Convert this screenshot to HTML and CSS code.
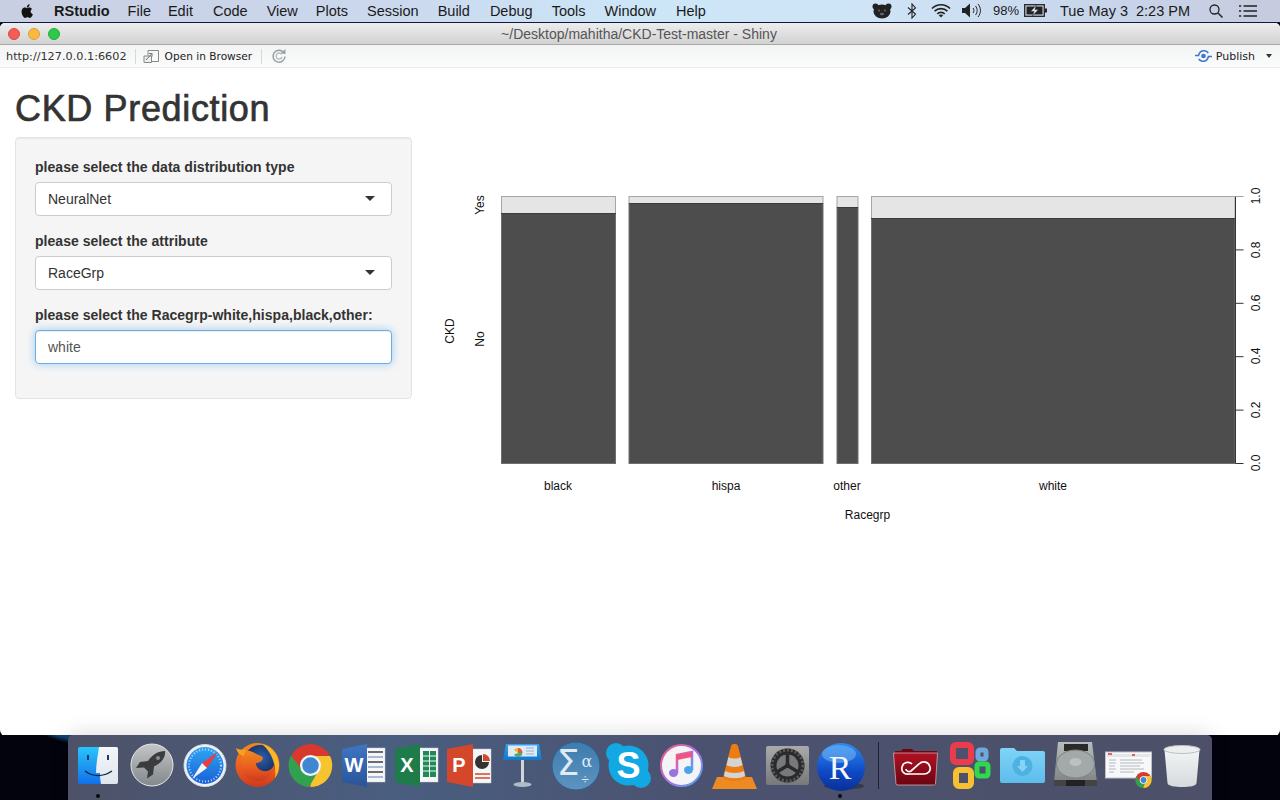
FILE: index.html
```html
<!DOCTYPE html>
<html lang="en">
<head>
<meta charset="utf-8">
<title>CKD Prediction</title>
<link rel="stylesheet" href="styles.css">
</head>
<body>
<svg class="defs" width="0" height="0" aria-hidden="true">
  <defs>
    <linearGradient id="gFinderL" x1="0" y1="0" x2="0" y2="1"><stop offset="0" stop-color="#29c5fb"/><stop offset="1" stop-color="#1270ea"/></linearGradient>
    <linearGradient id="gFinderR" x1="0" y1="0" x2="0" y2="1"><stop offset="0" stop-color="#f4f6f8"/><stop offset="1" stop-color="#dfe6ee"/></linearGradient>
    <linearGradient id="gGrey" x1="0" y1="0" x2="0" y2="1"><stop offset="0" stop-color="#c3c6c8"/><stop offset="1" stop-color="#82888b"/></linearGradient>
    <linearGradient id="gSafari" x1="0" y1="0" x2="0" y2="1"><stop offset="0" stop-color="#2fa6f2"/><stop offset="1" stop-color="#1a5fd6"/></linearGradient>
    <linearGradient id="gFox" x1="0" y1="0" x2="0" y2="1"><stop offset="0" stop-color="#f08a1e"/><stop offset=".6" stop-color="#e85a1f"/><stop offset="1" stop-color="#cf3a1c"/></linearGradient>
    <radialGradient id="gGlobe" cx=".55" cy=".4" r=".6"><stop offset="0" stop-color="#2a5fa8"/><stop offset="1" stop-color="#14265a"/></radialGradient>
    <linearGradient id="gMath" x1="0" y1="0" x2="0" y2="1"><stop offset="0" stop-color="#3d7cae"/><stop offset="1" stop-color="#5d93c0"/></linearGradient>
    <linearGradient id="gR" x1="0" y1="0" x2="0" y2="1"><stop offset="0" stop-color="#2e8bf0"/><stop offset=".6" stop-color="#0e49c4"/><stop offset="1" stop-color="#0a2f96"/></linearGradient>
    <linearGradient id="gTunes" x1="0" y1="0" x2="1" y2="1"><stop offset="0" stop-color="#f45a7e"/><stop offset=".5" stop-color="#b56ae0"/><stop offset="1" stop-color="#3fb0f2"/></linearGradient>
    <linearGradient id="gCC" x1="0" y1="0" x2="0" y2="1"><stop offset="0" stop-color="#b01224"/><stop offset="1" stop-color="#6b0410"/></linearGradient>
    <linearGradient id="gFolder" x1="0" y1="0" x2="0" y2="1"><stop offset="0" stop-color="#7fd4f8"/><stop offset="1" stop-color="#5cbdec"/></linearGradient>
    <linearGradient id="gHD" x1="0" y1="0" x2="0" y2="1"><stop offset="0" stop-color="#b7bcbc"/><stop offset="1" stop-color="#7f8585"/></linearGradient>
    <linearGradient id="gTrash" x1="0" y1="0" x2="0" y2="1"><stop offset="0" stop-color="#f2f4f5"/><stop offset="1" stop-color="#d6dadc"/></linearGradient>
    <linearGradient id="gCog" x1="0" y1="0" x2="0" y2="1"><stop offset="0" stop-color="#a8aaac"/><stop offset="1" stop-color="#77797b"/></linearGradient>
    <linearGradient id="gWord" x1="0" y1="0" x2="0" y2="1"><stop offset="0" stop-color="#3e76c4"/><stop offset="1" stop-color="#2a5499"/></linearGradient>
    <linearGradient id="gKey" x1="0" y1="0" x2="0" y2="1"><stop offset="0" stop-color="#2fa2ee"/><stop offset="1" stop-color="#1476cc"/></linearGradient>
  </defs>
</svg>

<header class="menubar">
  <nav class="menu-left">
    <svg class="apple" viewBox="0 0 14 16" width="14" height="16"><path d="M10.6 8.4c0-1.6 1.3-2.4 1.4-2.5-.8-1.100-2-1.300-2.400-1.300-1-.1-2 .6-2.500.6s-1.300-.6-2.200-.6c-1.100 0-2.200.7-2.800 1.700-1.200 2.100-.3 5.200.9 6.900.6.800 1.300 1.800 2.200 1.700.9 0 1.200-.6 2.300-.6s1.400.6 2.300.6c1 0 1.600-.9 2.100-1.700.7-1 1-1.900 1-2-.1 0-2.300-.9-2.300-2.800zM8.900 3.500c.5-.6.800-1.400.7-2.200-.7 0-1.500.5-2 1-.4.500-.8 1.300-.7 2.100.8.100 1.500-.4 2-.9z" fill="#111"/></svg>
    <span class="app-name">RStudio</span>
    <span class="m m-file">File</span>
    <span class="m m-edit">Edit</span>
    <span class="m m-code">Code</span>
    <span class="m m-view">View</span>
    <span class="m m-plots">Plots</span>
    <span class="m m-session">Session</span>
    <span class="m m-build">Build</span>
    <span class="m m-debug">Debug</span>
    <span class="m m-tools">Tools</span>
    <span class="m m-window">Window</span>
    <span class="m">Help</span>
  </nav>
  <div class="menu-right">
    <svg class="st st-bear" viewBox="0 0 20 16" width="20" height="16"><circle cx="3.500" cy="3.500" r="3" fill="#222"/><circle cx="16.500" cy="3.500" r="3" fill="#222"/><ellipse cx="10" cy="8.500" rx="8.500" ry="7" fill="#222"/><circle cx="7" cy="7.500" r="1" fill="#667"/><circle cx="13" cy="7.500" r="1" fill="#667"/><ellipse cx="10" cy="11" rx="2" ry="1.300" fill="#667"/></svg>
    <svg class="st st-bt" viewBox="0 0 10 16" width="10" height="16"><path d="M1 4.500 8.500 11 5 15V1l3.500 4L1 11.500" fill="none" stroke="#222" stroke-width="1.100"/></svg>
    <svg class="st st-wifi" viewBox="0 0 20 15" width="20" height="15"><path d="M1 5.500c5-5 13-5 18 0M3.600 8.200c3.600-3.500 9.200-3.500 12.800 0M6.300 10.800c2-2 5.400-2 7.400 0" fill="none" stroke="#222" stroke-width="1.700"/><path d="M10 14.500 7.800 12.300c1.200-1.100 3.200-1.100 4.400 0z" fill="#222"/></svg>
    <svg class="st st-vol" viewBox="0 0 20 15" width="20" height="15"><path d="M0 5h3l5-4.500v14L3 10H0z" fill="#222"/><path d="M11 5c1.200 1.500 1.200 3.500 0 5M13.500 3c2.200 2.700 2.200 6.300 0 9M16 1c3.300 4 3.300 9 0 13" fill="none" stroke="#222" stroke-width="1"/></svg>
    <span class="st-pct">98%</span>
    <svg class="st st-bat" viewBox="0 0 23 13" width="23" height="13"><rect x=".7" y=".7" width="19.600" height="11.600" fill="none" stroke="#222" stroke-width="1.300"/><rect x="2.500" y="2.500" width="16" height="8" fill="#222"/><rect x="21" y="4.500" width="2" height="4" fill="#222"/><path d="M12.500 1 6.500 7.500h3.500L8.500 12l6-6.500h-3.500z" fill="#d8e0ee" stroke="#222" stroke-width=".5"/></svg>
    <span class="st-date">Tue May 3</span>
    <span class="st-time">2:23 PM</span>
    <svg class="st st-search" viewBox="0 0 14 14" width="14" height="14"><circle cx="5.500" cy="5.500" r="4.500" fill="none" stroke="#222" stroke-width="1.300"/><path d="M9 9l4.500 4.500" stroke="#222" stroke-width="1.500"/></svg>
    <svg class="st st-list" viewBox="0 0 18 12" width="18" height="12"><path d="M4.500 1H18M4.500 6H18M4.500 11H18M0 1h2.200M0 6h2.200M0 11h2.200" stroke="#222" stroke-width="1.700"/></svg>
  </div>
</header>

<div class="window">
  <div class="titlebar">
    <div class="lights"><i class="light red"></i><i class="light amber"></i><i class="light green"></i></div>
    <div class="title">~/Desktop/mahitha/CKD-Test-master - Shiny</div>
  </div>
  <div class="toolbar">
    <span class="url">http://127.0.0.1:6602</span>
    <i class="tsep tsep-a"></i>
    <svg class="open-ico" viewBox="0 0 17 15" width="17" height="15"><path d="M5 1.500h10.500v11H9M5 1.500v5" fill="none" stroke="#888" stroke-width="1"/><path d="M1 7h7.500v6.500H1z" fill="#eee" stroke="#888" stroke-width="1"/><path d="M3 11 9 4.500M6 4.500h3v3" fill="none" stroke="#777" stroke-width="1"/></svg>
    <span class="open-text">Open in Browser</span>
    <i class="tsep tsep-b"></i>
    <svg class="reload" viewBox="0 0 16 16" width="16" height="16"><path d="M12.500 4.200A6 6 0 1 0 14 8.500" fill="none" stroke="#98a0a6" stroke-width="1.500"/><path d="M10.500 6.200A3 3 0 1 0 11 9" fill="none" stroke="#b8bec2" stroke-width="1.500"/><path d="M9.500 5.500 14.500 1v5z" fill="#98a0a6"/></svg>
    <div class="publish">
      <svg class="pub-ico" viewBox="0 0 17 14" width="17" height="14"><circle cx="8.500" cy="7" r="2.300" fill="#3a78c9"/><path d="M0 6.500h3.500C4.500 3 7 1.500 9.500 1.800c1.800.2 3 1.100 3.700 2.200M17 7.500h-3.500c-1 3.500-3.500 5-6 4.700-1.800-.2-3-1.100-3.700-2.200" fill="none" stroke="#3a78c9" stroke-width="1.600"/></svg>
      <span class="pub-text">Publish</span>
      <i class="caret-small"></i>
    </div>
  </div>
  <main class="shiny">
    <h2 class="app-title">CKD Prediction</h2>
    <div class="row">
      <form class="well">
        <div class="group">
          <label class="lab">please select the data distribution type</label>
          <div class="control select">NeuralNet<i class="caret"></i></div>
        </div>
        <div class="group">
          <label class="lab">please select the attribute</label>
          <div class="control select">RaceGrp<i class="caret"></i></div>
        </div>
        <div class="group">
          <label class="lab">please select the Racegrp-white,hispa,black,other:</label>
          <div class="control input">white</div>
        </div>
      </form>
      <svg class="plot" viewBox="427 137 838 400" width="838" height="400">
        <g class="bars-no">
          <rect x="501.500" y="213.500" width="114" height="250"/>
          <rect x="629" y="203.500" width="194" height="260"/>
          <rect x="837" y="207.500" width="21" height="256"/>
          <rect x="871.500" y="218.500" width="363.500" height="245"/>
        </g>
        <g class="bars-yes">
          <rect x="501.500" y="196.500" width="114" height="17"/>
          <rect x="629" y="196.500" width="194" height="7"/>
          <rect x="837" y="196.500" width="21" height="11"/>
          <rect x="871.500" y="196.500" width="363.500" height="22"/>
        </g>
        <path class="divide" d="M501 213.500h115M629 203.500h194M837 207.500h21M871 218.500h364"/>
        <path class="axis" d="M1235.500 196.500V463.500M1235.500 249.900h8M1235.500 303.300h8M1235.500 356.700h8M1235.500 410.100h8M1235.500 463.500h8"/>
        <path class="axis-top" d="M1235.500 196.500h8"/>
        <g class="tick">
          <text transform="translate(1260 196) rotate(-90)">1.0</text>
          <text transform="translate(1260 250) rotate(-90)">0.8</text>
          <text transform="translate(1260 303) rotate(-90)">0.6</text>
          <text transform="translate(1260 356) rotate(-90)">0.4</text>
          <text transform="translate(1260 410) rotate(-90)">0.2</text>
          <text transform="translate(1260 463) rotate(-90)">0.0</text>
          <text transform="translate(484 205) rotate(-90)">Yes</text>
          <text transform="translate(484 339) rotate(-90)">No</text>
          <text transform="translate(454 331) rotate(-90)">CKD</text>
          <text x="558" y="490">black</text>
          <text x="726" y="490">hispa</text>
          <text x="847" y="490">other</text>
          <text x="1053" y="490">white</text>
          <text x="867.500" y="519">Racegrp</text>
        </g>
      </svg>
    </div>
  </main>
</div>

<footer class="desk">
  <div class="dock">
    <div class="cell">
      <svg class="ico" viewBox="0 0 53 48"><rect x="6" y="5" width="40" height="37" rx="2" fill="url(#gFinderL)"/><path d="M27 5h17a2 2 0 0 1 2 2v33a2 2 0 0 1-2 2H29c-1-5-1-8-1-11h-4c0-9 2-18 3-26z" fill="url(#gFinderR)"/><rect x="15" y="13" width="2" height="5" fill="#163a6a"/><rect x="35" y="13" width="2" height="5" fill="#163a6a"/><path d="M13 29c8 6 18 6 27 0" fill="none" stroke="#12233f" stroke-width="1.500"/></svg>
      <i class="dot"></i>
    </div>
    <div class="cell">
      <svg class="ico" viewBox="0 0 53 48"><circle cx="27" cy="23" r="21" fill="url(#gGrey)" stroke="#e6e8e9" stroke-width="1"/><path d="M40 9c-7 0-13 4-17 10l-8 1-4 6 8-.6 4 4-1 7 6-4 1-8c7-3 12-9 11-16z" fill="#3b3c3e"/><circle cx="33" cy="16" r="2" fill="#8a8e90"/></svg>
    </div>
    <div class="cell">
      <svg class="ico" viewBox="0 0 53 48"><circle cx="27" cy="23.500" r="21" fill="#eef2f6" stroke="#d4d9de"/><circle cx="27" cy="23.500" r="18.500" fill="url(#gSafari)"/><circle cx="27" cy="23.500" r="16" fill="none" stroke="#bcdcf7" stroke-width="2" stroke-dasharray="1 2"/><path d="M40 10 24 21l5 5z" fill="#ef3b3b"/><path d="M14 37 29 26l-5-5z" fill="#f2f4f6"/></svg>
    </div>
    <div class="cell">
      <svg class="ico" viewBox="0 0 53 48"><circle cx="26.500" cy="23" r="22" fill="url(#gFox)"/><circle cx="29" cy="19" r="16" fill="url(#gGlobe)"/><path d="M31 2c9 2 16 10 17 19 .5 6-1 11-4 15 1-6 0-10-1-14-1-7-6-15-12-20z" fill="#f9b828"/><path d="M13 9c6-2 11 3 17 5 4 2 1 7-5 7 0 5 5 9 11 8 5-1 7-5 8-9 0 12-8 19-17 19-11 0-17-8-17-16 0-5 1-10 3-14z" fill="url(#gFox)"/><path d="M5 6c1 4 3 7 8 8l2-7C12 8 8 8 5 6z" fill="#f4a11f"/></svg>
    </div>
    <div class="cell">
      <svg class="ico" viewBox="0 0 53 48"><circle cx="26.500" cy="23.500" r="21.500" fill="#d9382c"/><path d="M26.500 45A21.500 21.500 0 0 0 46 14H26.500z" fill="#f6c42f"/><path d="M7 13.500a21.500 21.500 0 0 0 18 31.400L36 26l-19 .5z" fill="#2fa14f"/><circle cx="26.500" cy="23.500" r="10.500" fill="#f1f4f7"/><circle cx="26.500" cy="23.500" r="8.200" fill="#3f87d0"/></svg>
    </div>
    <div class="cell">
      <svg class="ico" viewBox="0 0 53 48"><rect x="26" y="6" width="22" height="34" fill="#f5f6f8" stroke="#c8ccd2" stroke-width=".5"/><path d="M31 10h15M31 20h15M31 30h15" stroke="#3c3f46" stroke-width="1.500"/><path d="M31 15h15M31 25h15M31 35h15" stroke="#8fa6c8" stroke-width="1.500"/><path d="M5 7 30 2v43L5 40z" fill="url(#gWord)"/><text class="ico-text word" x="17" y="30">W</text></svg>
    </div>
    <div class="cell">
      <svg class="ico" viewBox="0 0 53 48"><rect x="26" y="6" width="22" height="34" fill="#f5f6f8" stroke="#c8ccd2" stroke-width=".5"/><path d="M33 9h6v26h-6zM40 9h6v26h-6z" fill="#1f8a56"/><path d="M33 14h13M33 19h13M33 24h13M33 29h13" stroke="#f5f6f8" stroke-width="1.200"/><path d="M5 7 30 2v43L5 40z" fill="#1e7c4b"/><text class="ico-text word" x="17" y="30">X</text></svg>
    </div>
    <div class="cell">
      <svg class="ico" viewBox="0 0 53 48"><rect x="26" y="7" width="22" height="34" fill="#f5f6f8" stroke="#c8ccd2" stroke-width=".5"/><path d="M39 13a7 7 0 1 0 7 7h-7z" fill="#333"/><path d="M40 12v7h7a7 7 0 0 0-7-7z" fill="#d4482a"/><path d="M32 32h15M32 36h15" stroke="#d4482a" stroke-width="1.300"/><path d="M4 7 30 2v43L4 40z" fill="#d5472a"/><text class="ico-text word" x="16" y="30">P</text></svg>
    </div>
    <div class="cell">
      <svg class="ico" viewBox="0 0 53 48"><path d="M10 2h33l3 16H7z" fill="url(#gKey)"/><rect x="12" y="3.500" width="29" height="11" fill="#dfeaf4"/><path d="M22 11V6a4.500 4.500 0 0 1 4.500 5z" fill="#e15d3e"/><path d="M22 11 18 8a4.500 4.500 0 0 1 4-2z" fill="#f2b33a"/><path d="M22 11h4.500A4.500 4.500 0 0 1 18 12.500z" fill="#48b06a"/><path d="M30 6h8M30 9h8M30 12h8" stroke="#8fb0d2"/><rect x="25" y="18" width="3" height="23" fill="#cfd5da"/><ellipse cx="26.500" cy="42.500" rx="9" ry="2.500" fill="#aebcc8"/></svg>
    </div>
    <div class="cell">
      <svg class="ico" viewBox="0 0 53 48"><circle cx="27" cy="24" r="24" fill="url(#gMath)" stroke="#2d5f8c"/><text class="ico-text sigma" x="19" y="33">Σ</text><text class="ico-text alpha" x="38" y="25">α</text><text class="ico-text divide-sign" x="36" y="42">÷</text></svg>
    </div>
    <div class="cell">
      <svg class="ico" viewBox="0 0 53 48"><circle cx="26.500" cy="23.500" r="20" fill="#12a8e4"/><circle cx="14" cy="11" r="10" fill="#12a8e4"/><circle cx="39" cy="36" r="10" fill="#12a8e4"/><text class="ico-text skype" x="26.500" y="36">S</text></svg>
    </div>
    <div class="cell">
      <svg class="ico" viewBox="0 0 53 48"><circle cx="26.500" cy="23.500" r="20.500" fill="#f4f3f6" stroke="url(#gTunes)" stroke-width="2"/><path d="M22 31V13l15-3v18" fill="none" stroke="url(#gTunes)" stroke-width="2.500"/><path d="M22 13l15-3v5l-15 3z" fill="#f0557c"/><ellipse cx="18.500" cy="31" rx="4.500" ry="4" fill="#9a72e0"/><ellipse cx="33.500" cy="28" rx="4.500" ry="4" fill="#4aa4ec"/></svg>
    </div>
    <div class="cell">
      <svg class="ico" viewBox="0 0 53 48"><path d="M4 47 9 35h35l5 12z" fill="#ee8a22"/><path d="M15 36 23 4c1-3 6-3 7 0l8 32c-6 4-17 4-23 0z" fill="#ee7c13"/><path d="M20.500 15c3 2 9 2 12 0l2 8c-4 2.500-12 2.500-16 0zM17 29c5 2.500 14 2.500 19 0l1 5c-5 3-15 3-21 0z" fill="#d3d4d4"/></svg>
    </div>
    <div class="cell">
      <svg class="ico" viewBox="0 0 53 48"><rect x="5" y="4" width="43" height="39" rx="2" fill="url(#gCog)"/><circle cx="26.500" cy="23.500" r="17" fill="#2b2b2d"/><circle cx="26.500" cy="23.500" r="15.500" fill="none" stroke="#5a5a5c" stroke-width="3" stroke-dasharray="2 2"/><circle cx="26.500" cy="23.500" r="11" fill="#77797b"/><path d="M26.500 23.500V12M26.500 23.500 16 30M26.500 23.500 37 30" stroke="#2b2b2d" stroke-width="3.500"/><circle cx="26.500" cy="23.500" r="2.500" fill="#2b2b2d"/></svg>
    </div>
    <div class="cell">
      <svg class="ico" viewBox="0 0 53 48"><ellipse cx="30" cy="44" rx="20" ry="3.500" fill="#33384a"/><circle cx="27" cy="25" r="24" fill="url(#gR)"/><ellipse cx="25" cy="12" rx="17" ry="9" fill="#7dbdf7" opacity=".5"/><text class="ico-text rlet" x="26" y="37">R</text></svg>
      <i class="dot"></i>
    </div>
    <i class="dock-sep"></i>
    <div class="cell">
      <svg class="ico" viewBox="0 0 53 48"><path d="M6 9h6l2-2h9l2 2h23v4H6z" fill="#6e0611"/><path d="M4.500 11h44l-2 31a2 2 0 0 1-2 1H9a2 2 0 0 1-2-1z" fill="url(#gCC)" stroke="#d5a8ae" stroke-width=".8"/><path d="M23 22c-3-3-9-2-10 3-1 4 2 8 7 7h15c4 0 7-3 6-7-1-5-7-7-11-3l-8 7c-2 1.500-5 0-5-2" fill="none" stroke="#fff" stroke-width="1.700"/></svg>
    </div>
    <div class="cell">
      <svg class="ico" viewBox="0 0 53 48"><rect x="11" y="3" width="18" height="17" rx="3" fill="none" stroke="#ec3b4c" stroke-width="6"/><rect x="36" y="8" width="8" height="9" rx="2" fill="none" stroke="#6fa8dc" stroke-width="5"/><rect x="14" y="28" width="15" height="16" rx="3" fill="none" stroke="#f6c032" stroke-width="6"/><rect x="35" y="22" width="11" height="12" rx="2" fill="none" stroke="#2fd84c" stroke-width="5"/></svg>
    </div>
    <div class="cell">
      <svg class="ico" viewBox="0 0 53 48"><path d="M5 8a2 2 0 0 1 2-2h12l3 3h26a2 2 0 0 1 2 2v28a2 2 0 0 1-2 2H7a2 2 0 0 1-2-2z" fill="url(#gFolder)"/><circle cx="27.500" cy="24" r="10" fill="#4db2e0"/><path d="M25 18h5v6h3l-5.500 6-5.500-6h3z" fill="#86d3f5"/></svg>
    </div>
    <div class="cell">
      <svg class="ico" viewBox="0 0 53 48"><path d="M10 0h34l5 40H6z" fill="url(#gHD)"/><path d="M6 38h43v6H6z" fill="#444"/><rect x="16" y="2" width="24" height="7" fill="#2a2a2a"/><ellipse cx="27.500" cy="22" rx="19" ry="14" fill="#a3a9a9" stroke="#7c8282"/><ellipse cx="27.500" cy="20" rx="6" ry="4" fill="#bcc0c0"/><path d="M18 38h19v6H18z" fill="#222"/></svg>
    </div>
    <div class="cell">
      <svg class="ico" viewBox="0 0 53 48"><rect x="4.500" y="10" width="46" height="26" fill="#f7f8f9" stroke="#bfc3c7"/><rect x="6" y="12" width="43" height="3" fill="#e4e6e9"/><path d="M7 12h4M31 13h3" stroke="#d33" stroke-width="1.500"/><path d="M8 18h7M8 21h7M8 24h6M8 27h7M8 30h5M19 18h22M19 21h24M19 24h20M19 27h24M19 30h14" stroke="#b4b8bc"/><circle cx="42.500" cy="38" r="8" fill="#d9382c"/><path d="M42.500 46a8 8 0 0 0 7-12h-7z" fill="#f6c42f"/><path d="M35.500 34a8 8 0 0 0 6 12l4-7-7 0z" fill="#2fa14f"/><circle cx="42.500" cy="38" r="3.500" fill="#3f87d0" stroke="#f1f4f7"/></svg>
    </div>
    <div class="cell">
      <svg class="ico" viewBox="0 0 53 48"><path d="M10.500 8h35l-3 33c0 3-7 4-14 4s-15-1-15-4z" fill="url(#gTrash)"/><ellipse cx="28" cy="7.500" rx="18" ry="4" fill="#eceef0" stroke="#bcc1c4"/></svg>
    </div>
  </div>
</footer>
</body>
</html>
```

FILE: styles.css
```css
* { box-sizing: border-box; }
html, body { margin: 0; padding: 0; }
body {
  width: 1280px;
  height: 800px;
  overflow: hidden;
  display: flex;
  flex-direction: column;
  background: #02030c;
  font-family: "Liberation Sans", Arial, sans-serif;
  color: #333;
}
.defs { position: absolute; }

/* Menu bar */
.menubar {
  height: 23px;
  flex: none;
  display: flex;
  justify-content: space-between;
  align-items: center;
  padding: 0 23px 1px 20px;
  background: linear-gradient(90deg, #c9cfe2 0%, #cbd8ee 30%, #cce6f8 50%, #cfe4f7 68%, #c8d6ec 85%, #c6cbde 100%);
  border-bottom: 1px solid #101a3a;
  font-size: 14.500px;
  color: #1a1a1a;
}
.menu-left, .menu-right { display: flex; align-items: center; }
.apple { margin-right: 20px; }
.app-name { font-weight: 700; margin-right: 18px; }
.m-file { margin-right: 17px; }
.m-edit { margin-right: 20px; }
.m-code { margin-right: 19px; }
.m-view { margin-right: 18px; }
.m-plots { margin-right: 19px; }
.m-session { margin-right: 19px; }
.m-build { margin-right: 20px; }
.m-debug { margin-right: 19px; }
.m-tools { margin-right: 19px; }
.m-window { margin-right: 20px; }
.st { display: block; }
.st-bear { margin-right: 15px; }
.st-bt { margin-right: 14px; }
.st-wifi { margin-right: 11px; }
.st-vol { margin-right: 11px; }
.st-pct { font-size: 13px; margin-right: 5px; }
.st-bat { margin-right: 13px; }
.st-date { margin-right: 8px; }
.st-time { margin-right: 19px; }
.st-search { margin-right: 16px; }

/* Window */
.window {
  height: 713px;
  flex: none;
  display: flex;
  flex-direction: column;
  background: #fff;
  border-radius: 5px 5px 6px 6px;
  overflow: hidden;
}
.titlebar {
  height: 22px;
  flex: none;
  position: relative;
  display: flex;
  align-items: center;
  justify-content: center;
  background: linear-gradient(#ededed, #d2d2d2);
  border-bottom: 1px solid #a8a8a8;
}
.lights { position: absolute; left: 8px; top: 5px; display: flex; gap: 8px; }
.light { width: 12px; height: 12px; border-radius: 50%; display: block; }
.red { background: #f25d55; border: 1px solid #df4744; }
.amber { background: #f8b93f; border: 1px solid #dfa02f; }
.green { background: #2fc84b; border: 1px solid #22ad3a; }
.title { font-size: 14px; color: #555; padding-right: 2px; }
.toolbar {
  height: 23px;
  flex: none;
  display: flex;
  align-items: center;
  padding: 0 8px 0 6px;
  background: linear-gradient(#f2f4f4, #fbfbfb);
  border-bottom: 1px solid #ececec;
  font-family: "DejaVu Sans", sans-serif;
  font-size: 11px;
  color: #222;
}
.url { color: #333; font-size: 11.250px; }
.tsep { display: block; width: 1px; height: 15px; background: #d8d8d8; }
.tsep-a { margin: 0 7px 0 8px; }
.open-ico { margin-right: 5px; }
.open-text { font-size: 10.600px; }
.tsep-b { margin: 0 9px; }
.publish { margin-left: auto; display: flex; align-items: center; }
.pub-ico { margin-right: 4px; }
.pub-text { font-size: 11px; margin-right: 11px; }
.caret-small { width: 0; height: 0; border: 3.500px solid transparent; border-top: 4px solid #333; border-bottom: 0; }

/* Shiny page */
.shiny { flex: 1; padding: 0 15px; }
.app-title {
  margin: 21px 0 8px;
  font-size: 36px;
  font-weight: 400;
  line-height: 39.600px;
  letter-spacing: .65px;
  color: #333;
  -webkit-text-stroke: 0.700px #333;
}
.row { display: flex; gap: 15px; align-items: flex-start; }
.well {
  width: 397px;
  flex: none;
  padding: 19px;
  background: #f5f5f5;
  border: 1px solid #e3e3e3;
  border-radius: 4px;
  box-shadow: inset 0 1px 1px rgba(0, 0, 0, .05);
}
.group { margin-bottom: 15px; }
.lab {
  display: block;
  height: 20px;
  margin-bottom: 5px;
  font-size: 14px;
  font-weight: 700;
  line-height: 20px;
  letter-spacing: .03px;
  color: #333;
}
.control {
  position: relative;
  height: 34px;
  padding: 6px 12px;
  background: #fff;
  border: 1px solid #ccc;
  border-radius: 4px;
  font-size: 14px;
  line-height: 20px;
  color: #333;
}
.input {
  border-color: #66afe9;
  color: #555;
  box-shadow: inset 0 1px 1px rgba(0, 0, 0, .075), 0 0 8px rgba(102, 175, 233, .6);
}
.caret {
  position: absolute;
  right: 16px;
  top: 13px;
  width: 0;
  height: 0;
  border: 5px solid transparent;
  border-top: 5px solid #333;
  border-bottom: 0;
}
.plot { flex: none; display: block; }
.bars-no rect { fill: #4d4d4d; stroke: #6e6e6e; stroke-width: 1; }
.bars-yes rect { fill: #e5e5e5; stroke: #a6a6a6; stroke-width: 1; }
.divide { fill: none; stroke: #3c3c3c; stroke-width: 1; }
.axis { fill: none; stroke: #333; stroke-width: 1; }
.axis-top { fill: none; stroke: #a0a0a0; stroke-width: 1; }
.tick text { font-family: "Liberation Sans", Arial, sans-serif; font-size: 12px; fill: #111; text-anchor: middle; }

/* Dock */
.desk {
  flex: 1;
  padding-left: 68px;
  margin-top: -1px;
  background: radial-gradient(circle at 80px -72px, #12406f 0, #12406f 76px, #02030c 81px) no-repeat;
  position: relative;
}
.dock {
  width: 1144px;
  height: 65px;
  padding: 7px 0 0 4px;
  display: flex;
  align-items: flex-start;
  background: linear-gradient(90deg, #4d5268 0%, #4a5e80 28%, #4b5270 55%, #4d5068 100%);
  border-radius: 5px 5px 0 0;
  box-shadow: 0 -2px 20px rgba(0, 0, 0, .13);
}
.cell { width: 53px; flex: none; position: relative; }
.ico { display: block; width: 53px; height: 48px; overflow: visible; }
.dot {
  position: absolute;
  left: 24px;
  top: 52px;
  width: 4px;
  height: 4px;
  border-radius: 50%;
  background: #0a0a0a;
}
.dock-sep { display: block; flex: none; width: 1px; height: 47px; margin: 0 10px 0 11px; background: #1e2334; }
.ico-text { font-family: "Liberation Sans", Arial, sans-serif; text-anchor: middle; fill: #fff; font-weight: 700; }
.word { font-size: 20px; }
.sigma { font-family: "DejaVu Sans", sans-serif; font-size: 36px; font-weight: 400; fill: #dfeaf4; }
.alpha { font-family: "DejaVu Serif", serif; font-size: 16px; font-weight: 400; fill: #dfeaf4; }
.divide-sign { font-size: 13px; font-weight: 400; fill: #dfeaf4; }
.skype { font-size: 36px; }
.rlet { font-family: "Liberation Serif", serif; font-size: 34px; font-weight: 400; fill: #f4f8fc; }
```
